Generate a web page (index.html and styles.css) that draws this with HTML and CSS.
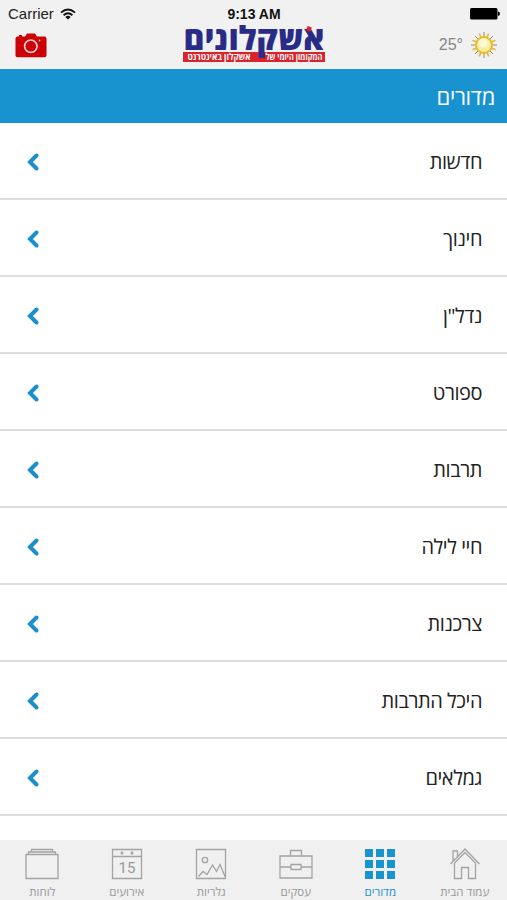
FILE: index.html
```html
<!DOCTYPE html>
<html lang="he" dir="rtl">

<head>
    <meta charset="utf-8">
    <meta name="viewport" content="width=device-width, initial-scale=1">
    <title>אשקלונים</title>
    <link rel="stylesheet" href="styles.css">
</head>

<body>

    <header class="header" dir="ltr">
        <div class="status">
            <div class="carrier">Carrier
                <svg width="16" height="12" viewBox="0 0 16 12" fill="none" stroke="#111" stroke-width="1.9">
                    <path d="M1 4.6Q8-1.6 15 4.6M3.6 7.2Q8 3.3 12.4 7.2" />
                    <path d="M8 11.6L5.3 8.9Q8 6.8 10.7 8.9Z" fill="#111" stroke="none" />
                </svg>
            </div>
            <div class="time">9:13 AM</div>
            <svg class="battery" width="30" height="12" viewBox="0 0 30 12">
                <rect width="27.5" height="11.5" rx="1.5" />
                <path d="M28 3.5Q30 4 30 5.8T28 8Z" />
            </svg>
        </div>
        <div class="brand">
            <svg class="camera" width="32" height="25" viewBox="0 0 32 25">
                <path d="M2 3.5H4V2H7V3.5H10L12 .5H20L22 3.5H29.5Q31.5 3.5 31.5 5.5V22.5Q31.5 24.3 29.5 24.3H2.5Q.5 24.3 .5 22.5V5Z" fill="#cc0007" />
                <circle cx="15.8" cy="13.2" r="6.2" fill="none" stroke="#f6c9c9" stroke-width="1.7" />
                <circle cx="24.5" cy="7.5" r=".9" fill="#f6c9c9" />
            </svg>
            <svg class="logo" width="146" height="44" viewBox="0 0 146 44">
                <rect x="2" y="33" width="142" height="10" fill="#d9232d" />
                <text class="logo-name" x="73" y="31" textLength="141" lengthAdjust="spacingAndGlyphs">אשקלונים</text>
                <rect x="126" y="7.500" width="4.500" height="4.500" fill="#d9232d" transform="rotate(20 128 9)" />
                <text class="logo-sub" x="113" y="40.800" textLength="57" lengthAdjust="spacingAndGlyphs">המקומון היומי של</text>
                <text class="logo-sub" x="38" y="40.800" textLength="63" lengthAdjust="spacingAndGlyphs">אשקלון באינטרנט</text>
            </svg>
            <div class="weather">
                <span>25°</span>
                <svg width="28" height="28" viewBox="0 0 28 28">
                    <path d="M14 1V27M1 14H27M5 5L23 23M23 5L5 23" stroke="#8f8a78" stroke-width="1" />
                    <path d="M9.300 2.500L18.700 25.500M18.700 2.500L9.300 25.500M2.500 9.300L25.500 18.700M2.500 18.700L25.500 9.300" stroke="#e4b73c" stroke-width="1.600" />
                    <circle cx="14" cy="14" r="8" fill="#f8ee9c" stroke="#e9b928" stroke-width="1.800" />
                    <circle cx="13" cy="12" r="4.500" fill="#fbf8d5" />
                </svg>
            </div>
        </div>
    </header>

    <h1 class="title">מדורים</h1>

    <ul class="list">
        <li>חדשות <svg class="arrow" viewBox="0 0 12 18"><path d="M9.500 2.500L3 9L9.500 15.500" /></svg></li>
        <li>חינוך <svg class="arrow" viewBox="0 0 12 18"><path d="M9.500 2.500L3 9L9.500 15.500" /></svg></li>
        <li>נדל"ן <svg class="arrow" viewBox="0 0 12 18"><path d="M9.500 2.500L3 9L9.500 15.500" /></svg></li>
        <li>ספורט <svg class="arrow" viewBox="0 0 12 18"><path d="M9.500 2.500L3 9L9.500 15.500" /></svg></li>
        <li>תרבות <svg class="arrow" viewBox="0 0 12 18"><path d="M9.500 2.500L3 9L9.500 15.500" /></svg></li>
        <li>חיי לילה <svg class="arrow" viewBox="0 0 12 18"><path d="M9.500 2.500L3 9L9.500 15.500" /></svg></li>
        <li>צרכנות <svg class="arrow" viewBox="0 0 12 18"><path d="M9.500 2.500L3 9L9.500 15.500" /></svg></li>
        <li>היכל התרבות <svg class="arrow" viewBox="0 0 12 18"><path d="M9.500 2.500L3 9L9.500 15.500" /></svg></li>
        <li>גמלאים <svg class="arrow" viewBox="0 0 12 18"><path d="M9.500 2.500L3 9L9.500 15.500" /></svg></li>
    </ul>

    <nav class="tabs">
        <a class="tab">
            <svg viewBox="0 0 34 34">
                <path d="M2.500 18L17 3L31.500 18M5 15.500V5H9.500V10.500M6.500 17V32.500H13.500V21.500H20.500V32.500H27.500V17L17 6.500L6.500 17" />
            </svg>
            <span>עמוד הבית</span>
        </a>
        <a class="tab active">
            <svg viewBox="0 0 34 34">
                <path d="M2 3h8v8H2zM13 3h8v8h-8zM24 3h8v8h-8zM2 14h8v8H2zM13 14h8v8h-8zM24 14h8v8h-8zM2 25h8v8H2zM13 25h8v8h-8zM24 25h8v8h-8z" />
            </svg>
            <span>מדורים</span>
        </a>
        <a class="tab">
            <svg viewBox="0 0 34 34">
                <path d="M1 10h32v22H1zM11.500 10V4.500H22.500V10M1 21H12M22 21H33M12 18.500h10v5H12z" />
            </svg>
            <span>עסקים</span>
        </a>
        <a class="tab">
            <svg viewBox="0 0 34 34">
                <path d="M2.500 3.500h29v29h-29zM4.500 30.500L9 25.500L13 28.500L18.500 19L22.500 25.500L26 18.500L31 30.500" />
                <circle cx="11" cy="14" r="2.700" />
            </svg>
            <span>גלריות</span>
        </a>
        <a class="tab">
            <svg viewBox="0 0 34 34">
                <path d="M2.500 3.500h29v29h-29zM2.500 10.500H31.500" />
                <path d="M12 5.500v3M22 5.500v3" stroke-width="2.500" />
                <text class="day" x="17" y="26.500">15</text>
            </svg>
            <span>אירועים</span>
        </a>
        <a class="tab">
            <svg viewBox="0 0 34 34">
                <path d="M1 8.500h32v24H1zM3.500 8V6H30.500V8M6.500 5.500V3.500H27.500V5.500" />
            </svg>
            <span>לוחות</span>
        </a>
    </nav>

</body>

</html>
```

FILE: styles.css
```css
* {
    box-sizing: border-box;
}

html,
body {
    height: 100%;
    margin: 0;
}

body {
    display: flex;
    flex-direction: column;
    overflow: hidden;
    background-color: #fff;
    color: #222;
    font-family: "Open Sans", sans-serif;
}

.header {
    flex: none;
    height: 69px;
    background-color: #f1f1f1;
    font-family: "Liberation Sans", Arial, sans-serif;
}

.status {
    display: grid;
    grid-template-columns: 1fr auto 1fr;
    align-items: center;
    height: 27px;
    padding: 0 7px 0 8px;
    font-size: 15px;
    color: #222;
}

.carrier {
    display: flex;
    align-items: center;
    gap: 6px;
}

.time {
    font-weight: bold;
    font-size: 14px;
    color: #111;
}

.battery {
    justify-self: end;
}

.brand {
    display: grid;
    grid-template-columns: 1fr auto 1fr;
    align-items: center;
    height: 36px;
    padding: 0 9px 0 15px;
}

.logo {
    margin: -8px 5px 0 0;
    overflow: visible;
}

.logo-name {
    direction: rtl;
    font-family: "Open Sans", sans-serif;
    font-size: 33px;
    font-weight: 800;
    text-anchor: middle;
    fill: #292c87;
}

.logo-sub {
    direction: rtl;
    font-family: "Open Sans", sans-serif;
    font-size: 9px;
    font-weight: bold;
    text-anchor: middle;
    fill: #fff;
}

.weather {
    display: flex;
    align-items: center;
    justify-content: flex-end;
    gap: 7px;
    color: #858585;
    font-size: 16px;
}

.title {
    flex: none;
    height: 54px;
    margin: 0;
    padding: 0 12px;
    background-color: #1992d0;
    color: #fff;
    font-size: 22px;
    font-weight: normal;
    letter-spacing: -0.3px;
    line-height: 55px;
}

.list {
    flex: 1;
    min-height: 0;
    margin: 0;
    padding: 0;
    list-style: none;
}

.list li {
    display: flex;
    align-items: center;
    justify-content: space-between;
    height: 77px;
    padding: 2px 25px 0 27px;
    border-bottom: 2px solid #dedede;
    font-size: 20px;
    letter-spacing: -0.45px;
}

.arrow {
    width: 12px;
    height: 18px;
    fill: none;
    stroke: #1b8fcb;
    stroke-width: 4;
    stroke-linecap: round;
}

.tabs {
    display: flex;
    flex: none;
    height: 60px;
    background-color: #f0f0f0;
}

.tab {
    display: flex;
    flex: 1;
    flex-direction: column;
    align-items: center;
    padding-top: 6px;
    color: #999;
    font-size: 11.5px;
    line-height: 15px;
    white-space: nowrap;
}

.tab svg {
    width: 34px;
    height: 34px;
    margin-bottom: 4px;
    fill: none;
    stroke: #a3a3a3;
    stroke-width: 1.3;
}

.tab .day {
    direction: ltr;
    font-family: Roboto, sans-serif;
    font-size: 15px;
    text-anchor: middle;
    fill: #999;
    stroke: none;
}

.active {
    color: #1992d0;
}

.active svg {
    fill: #1992d0;
    stroke: none;
}
```
